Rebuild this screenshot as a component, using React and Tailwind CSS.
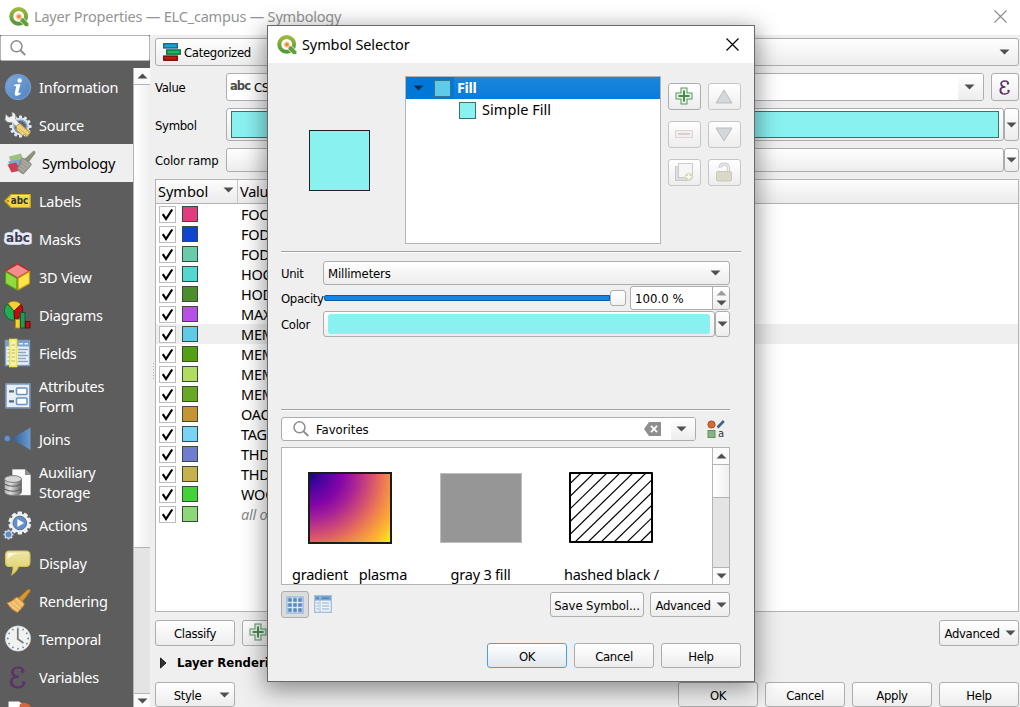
import React from "react";

const UI = "font-['Noto_Sans','Open_Sans',sans-serif]";
const TAH = "font-['DejaVu_Sans_Condensed','DejaVu_Sans',sans-serif] [font-stretch:condensed] text-[13px]";
const TXT = TAH + " tracking-[-0.33px] pt-[2px]";
const BTN = "border border-[#adadad] rounded-[3px] bg-linear-to-b from-white to-[#ededed]";

function Arrow({ up, className = "", fill = "#505050" }) {
  return (
    <svg className={"shrink-0 " + className} width="11" height="6" viewBox="0 0 11 6">
      <path d={up ? "M0.5 5.5H10.5L5.5 0.5Z" : "M0.5 0.5H10.5L5.5 5.5Z"} fill={fill} />
    </svg>
  );
}

function Logo({ size }) {
  return (
    <svg width={size} height={size} viewBox="0 0 20 20" className="shrink-0">
      <defs>
        <linearGradient id="ring" x1="0" y1="0" x2="0" y2="1">
          <stop offset="0" stopColor="#9cb83c" />
          <stop offset="1" stopColor="#559a3a" />
        </linearGradient>
        <radialGradient id="dot">
          <stop offset="0" stopColor="#e8692a" />
          <stop offset="0.45" stopColor="#f2a860" />
          <stop offset="1" stopColor="#fdf0d4" stopOpacity="0.2" />
        </radialGradient>
      </defs>
      <circle cx="9.7" cy="9.4" r="7.4" fill="none" stroke="url(#ring)" strokeWidth="4" />
      <path d="M11 11.2L14.2 10.6L19.8 16.4V19.6H16.2L11 14.2Z" fill="#5f9f3c" stroke="#fff" strokeWidth="0.8" />
      <circle cx="9.9" cy="9.6" r="4" fill="url(#dot)" />
    </svg>
  );
}

function Search({ className = "" }) {
  return (
    <svg className={"shrink-0 " + className} width="16" height="16" viewBox="0 0 16 16" fill="none" stroke="#8c8c8c" strokeWidth="1.5">
      <circle cx="6.5" cy="6.3" r="5.5" />
      <path d="M10.6 10.4L15.2 15" strokeWidth="2" />
    </svg>
  );
}

function Plus() {
  return (
    <svg width="18" height="18" viewBox="0 0 18 18" className="shrink-0">
      <path d="M5.5 0.5H12.5V5.5H17.5V12.5H12.5V17.5H5.5V12.5H0.5V5.5H5.5Z" fill="#5a9560" />
      <path d="M6.5 1.5H11.5V6.5H16.5V11.5H11.5V16.5H6.5V11.5H1.5V6.5H6.5Z" fill="#e8f3e6" />
      <path d="M9 3.5V14.5M3.5 9H14.5" stroke="#4a8a51" strokeWidth="2" />
    </svg>
  );
}

const gear = (cx, cy, r, n, t) =>
  Array.from({ length: n }, (_, i) => {
    const a = (i * 2 * Math.PI) / n;
    return (
      <rect key={i} x={cx - t / 2} y={cy - r} width={t} height={r} rx="0.6" transform={`rotate(${(a * 180) / Math.PI} ${cx} ${cy})`} />
    );
  });

const ICONS = {
  info: (
    <>
      <defs>
        <linearGradient id="inf" x1="0" y1="0" x2="1" y2="1">
          <stop offset="0" stopColor="#7fa9da" />
          <stop offset="1" stopColor="#4f83c2" />
        </linearGradient>
      </defs>
      <circle cx="14" cy="14" r="12.7" fill="#5b8fd0" stroke="#7ea8dc" strokeWidth="0.8" />
      <circle cx="14" cy="14" r="11.8" fill="url(#inf)" />
      <circle cx="15.6" cy="7.5" r="2.2" fill="#fff" />
      <path d="M10.4 11.4L16.4 10.9L14.4 19.4Q14.2 21 16.8 19.4L16.4 21.2Q10 24.8 10.8 19.8L12.3 13.3L10.1 13Z" fill="#fff" />
    </>
  ),
  source: (
    <>
      <g fill="#e4e8ee">{gear(16.5, 15.5, 11, 12, 3)}</g>
      <circle cx="16.5" cy="15.5" r="9" fill="#dce2ea" />
      <circle cx="16.5" cy="15.5" r="6.2" fill="#5d636b" stroke="#7f9dc6" strokeWidth="1.6" />
      <path d="M1.5 3.2L5 6.2L8.2 4.8L7.8 1.2Q12.8 1.6 11.5 8L17 14.5L14 17.5L8 11.2Q2.5 12.5 1 8.2L1.5 6Z" fill="#f0f0ee" stroke="#777" strokeWidth="0.5" />
      <path d="M12.2 15L16 12.5L26.5 21.5L23 26L20.5 23.5L18.500 24.500L12.500 19Z" fill="#ecd37c" stroke="#a98732" strokeWidth="0.9" />
      <path d="M14 17L24 24.500M17 14.500L25.500 22" stroke="#c3a04a" strokeWidth="0.7" />
    </>
  ),
  symbology: (
    <>
      <path d="M2 7.5L14 4.5L18.5 16L5 17.500Z" fill="#9cc27c" />
      <path d="M1 12.5L12 10.500L17 17L5 20.5Z" fill="#7ea9d0" />
      <path d="M0.500 15.500L9 13.500L14 21.500L4.500 23.5Z" fill="#cc4057" />
      <path d="M26.500 2.2Q28.500 1.8 28 4.2L21.500 13L17.800 10.2Z" fill="#8f9478" stroke="#71765f" strokeWidth="0.6" />
      <path d="M14 10.500Q15 8 17 9.500L23.500 14Q25 15.500 23.500 17L16.500 25Q12 23.500 10.200 19.500Q13 15.500 14 10.500Z" fill="#9a9c8f" stroke="#77796d" strokeWidth="0.7" />
      <path d="M15.500 10.500L23 16M12.500 18.500L17.500 23M14 16L19.500 20.500M15.500 13.500L21.500 18" stroke="#c0c0b4" strokeWidth="0.8" />
    </>
  ),
  labels: (
    <>
      <path d="M0.800 14L7 7.500H26.300V20.500H7Z" fill="#f2d73f" stroke="#c9a41b" strokeWidth="1.2" />
      <circle cx="4" cy="14" r="1.1" fill="#8c7a20" />
      <path d="M7.500 8.700H25.200" stroke="#fbf0a0" strokeWidth="1" />
      <text x="6.8" y="17" fontFamily="DejaVu Sans" fontWeight="bold" fontSize="10" fill="#333" textLength="17.5" lengthAdjust="spacingAndGlyphs">abc</text>
    </>
  ),
  masks: (
    <>
      <text x="2" y="17" fontFamily="DejaVu Sans" fontWeight="bold" fontSize="13" fill="#e6e9fb" stroke="#e6e9fb" strokeWidth="5.500" strokeLinejoin="round" textLength="24" lengthAdjust="spacingAndGlyphs">abc</text>
      <text x="2" y="17" fontFamily="DejaVu Sans" fontWeight="bold" fontSize="13" fill="#3c3c46" textLength="24" lengthAdjust="spacingAndGlyphs">abc</text>
    </>
  ),
  view3d: (
    <>
      <path d="M13.500 0.800L25.500 8L13.500 15L1.500 8Z" fill="#f48d8d" stroke="#c02626" strokeWidth="1.4" strokeLinejoin="round" />
      <path d="M1.500 8.500L13 15.300V27L1.500 20.500Z" fill="#8fdc3c" stroke="#4f9a1c" strokeWidth="1.2" strokeLinejoin="round" />
      <path d="M14 15.300L25.500 8.500V20.500L14 27Z" fill="#fbe44c" stroke="#c49a10" strokeWidth="1.2" strokeLinejoin="round" />
    </>
  ),
  diagrams: (
    <>
      <path d="M10 10L4 2.500A9 9 0 0 1 17 3.500Z" fill="#fbd02c" stroke="#9c7b10" strokeWidth="0.8" />
      <path d="M10 10L3.600 3A9.300 9.300 0 0 0 10.500 19.200Z" fill="#1fae54" stroke="#0d5c2a" strokeWidth="0.8" />
      <path d="M10 10L17 3.500A9.200 9.200 0 0 1 10.500 18Z" fill="#c00d0d" stroke="#5f0505" strokeWidth="0.8" />
      <rect x="11.500" y="18.500" width="4.500" height="8.500" fill="#fbd02c" stroke="#b78c0d" strokeWidth="0.9" />
      <rect x="16.500" y="11.500" width="4.500" height="15.500" fill="#1f9a58" stroke="#0e5630" strokeWidth="0.9" />
      <rect x="21.500" y="20.500" width="4.500" height="6.500" fill="#c00d0d" stroke="#5f0505" strokeWidth="0.9" />
    </>
  ),
  fields: (
    <>
      <rect x="1.500" y="1.500" width="24" height="25" fill="#eaf1f8" stroke="#7d9dc2" strokeWidth="1.4" />
      <rect x="2" y="2" width="23" height="5.500" fill="#7ba2cf" />
      <path d="M15 4.800H19M20.500 4.800H24" stroke="#e4edf7" strokeWidth="1.4" />
      <path d="M14 10.500H24M14 13.500H22M14 16.500H24M14 19.500H22M14 22.500H24" stroke="#8fa6be" strokeWidth="1.3" />
      <path d="M3.500 10.500H5M3.500 14H5M3.500 18H5M3.500 22H5" stroke="#8fa6be" strokeWidth="1.2" />
      <rect x="5.800" y="0.500" width="6.800" height="27" fill="#f9f3a4" stroke="#eee34a" strokeWidth="1.6" />
      <path d="M7.500 6H11M7.500 11H11M7.500 14H11M7.500 18H11M7.500 22H11" stroke="#b5b58a" strokeWidth="1" />
    </>
  ),
  form: (
    <>
      <rect x="1.900" y="1.900" width="24" height="24" fill="#e9eef3" stroke="#7694ba" strokeWidth="1.6" />
      <rect x="12.500" y="6" width="10.500" height="6.500" rx="1" fill="#fff" stroke="#6d93c4" strokeWidth="1.6" />
      <rect x="12.500" y="16" width="10.500" height="6.500" rx="1" fill="#fff" stroke="#6d93c4" strokeWidth="1.6" />
      <path d="M5 9.300H10M5 19.300H10" stroke="#4e6886" strokeWidth="2.2" />
    </>
  ),
  joins: (
    <>
      <defs>
        <linearGradient id="jn" x1="0" x2="1">
          <stop offset="0" stopColor="#2f5d92" />
          <stop offset="1" stopColor="#6a9bd0" />
        </linearGradient>
      </defs>
      <circle cx="3.200" cy="13.500" r="3" fill="#6293cb" stroke="#3c6699" strokeWidth="0.6" />
      <path d="M7.500 13.500L26.500 2.500V25Z" fill="url(#jn)" />
    </>
  ),
  aux: (
    <>
      <defs>
        <linearGradient id="db" x1="0" x2="1">
          <stop offset="0" stopColor="#b5b5b5" />
          <stop offset="0.35" stopColor="#dedede" />
          <stop offset="1" stopColor="#666" />
        </linearGradient>
      </defs>
      <path d="M8.500 1.500H21L26.500 7V27H8.500Z" fill="#fbfbfb" stroke="#ddd" strokeWidth="0.5" />
      <path d="M21 1.500V7H26.500Z" fill="#8a8a8a" />
      <path d="M0.500 11.500V24C0.500 28.500 17.500 28.500 17.500 24V11.500Z" fill="url(#db)" stroke="#6c6c6c" strokeWidth="0.8" />
      <path d="M0.500 16Q9 20.500 17.500 16M0.500 21Q9 25.500 17.500 21" fill="none" stroke="#5f5f5f" strokeWidth="1.1" />
      <ellipse cx="9" cy="11" rx="8.500" ry="3.400" fill="#d6d6d6" stroke="#777" strokeWidth="0.9" />
    </>
  ),
  actions: (
    <>
      <g fill="#eef0f4">{gear(15.8, 12, 11.4, 10, 4.4)}</g>
      <circle cx="15.800" cy="12" r="9.600" fill="#eef0f4" />
      <circle cx="15.800" cy="12" r="6.800" fill="#6090cc" stroke="#5a6e8c" strokeWidth="1" />
      <path d="M13.400 8L20 12L13.400 16Z" fill="#fff" />
      <g fill="#cfd9e6">{gear(4.500, 23.500, 5, 8, 2.2)}</g>
      <circle cx="4.500" cy="23.500" r="3.400" fill="#5d8dc8" stroke="#dfe6ef" strokeWidth="0.8" />
    </>
  ),
  display: (
    <>
      <defs>
        <linearGradient id="bb" x1="0" y1="0" x2="0" y2="1">
          <stop offset="0" stopColor="#ece6a8" />
          <stop offset="1" stopColor="#dfcf63" />
        </linearGradient>
      </defs>
      <path d="M5 2H22Q26 2 26 6V13Q26 17.500 22 17.500H14.500Q13 22 8 25.500Q9.500 21 9 17.500H5Q1.500 17.500 1.500 13V6Q1.500 2 5 2Z" fill="url(#bb)" stroke="#d6c258" strokeWidth="1.1" />
      <path d="M3.500 10V6Q3.500 4 6 4H17Q10 4.500 7 7Q5 8.500 3.500 10Z" fill="#fbf9e6" />
    </>
  ),
  rendering: (
    <>
      <path d="M24 2.500Q27 1.500 26 4.500L18.500 14.500L14.500 11Z" fill="#d9982f" stroke="#b27419" strokeWidth="0.9" />
      <path d="M11 11.500Q12.500 9.500 14.500 11L19.500 15.500Q21 17.500 19.500 19L13.500 25.500Q7.500 23.500 3 16Q7.500 15 11 11.500Z" fill="#ecb663" stroke="#c2832b" strokeWidth="0.9" />
      <path d="M5 16.300L13.500 24M8 14.500L16.500 22M12 12L19 18.500" stroke="#f7dcae" strokeWidth="1" />
    </>
  ),
  temporal: (
    <>
      <circle cx="14" cy="13.500" r="12.600" fill="#f1f1f0" stroke="#d7d7d7" strokeWidth="0.8" />
      <g fill="#5d86b4">
        {Array.from({ length: 12 }, (_, i) => (
          <circle key={i} cx="14" cy="3.300" r="0.900" transform={`rotate(${i * 30} 14 13.5)`} />
        ))}
      </g>
      <path d="M13.800 4V14L19.500 18" fill="none" stroke="#7b7b7b" strokeWidth="1.800" />
    </>
  ),
};

function Eps({ size = 23, className = "" }) {
  return (
    <svg width={(size * 17) / 23} height={size} viewBox="0 0 17 23" className={"shrink-0 " + className}>
      <path d="M14.500 6.500C14.500 3 12.500 1.500 9.200 1.500C5.800 1.500 3.200 3.400 3.200 6.300C3.200 9 5.300 10.600 9.800 10.800C4.300 10.900 1.800 13 1.800 16C1.800 19.500 5 21.400 8.900 21.400C13 21.400 15.800 19.300 15.300 15.600" fill="none" stroke="#5d3269" strokeWidth="2.200" />
      <path d="M3.900 4Q2.600 8 6.300 10M3.100 13.500Q1.300 18 5.300 20.300" fill="none" stroke="#5d3269" strokeWidth="2.200" />
      <circle cx="13.500" cy="5.500" r="1.700" fill="#5d3269" />
      <circle cx="14.300" cy="16.600" r="1.700" fill="#5d3269" />
    </svg>
  );
}

const NAV = [
  ["Information", "info"],
  ["Source", "source"],
  ["Symbology", "symbology"],
  ["Labels", "labels"],
  ["Masks", "masks"],
  ["3D View", "view3d"],
  ["Diagrams", "diagrams"],
  ["Fields", "fields"],
  ["Attributes\nForm", "form"],
  ["Joins", "joins"],
  ["Auxiliary\nStorage", "aux"],
  ["Actions", "actions"],
  ["Display", "display"],
  ["Rendering", "rendering"],
  ["Temporal", "temporal"],
  ["Variables", "eps"],
];

const ROWS = [
  ["bg-[#e03c7e]", "FOC"],
  ["bg-[#0f45d2]", "FOD"],
  ["bg-[#68cbab]", "FOD"],
  ["bg-[#53d7d1]", "HOC"],
  ["bg-[#4c8e2c]", "HOD"],
  ["bg-[#b650e8]", "MAX"],
  ["bg-[#60cbe8]", "MEM"],
  ["bg-[#52a015]", "MEM"],
  ["bg-[#b0dc60]", "MEM"],
  ["bg-[#68a825]", "MEM"],
  ["bg-[#c69434]", "OAC"],
  ["bg-[#79d3f6]", "TAG"],
  ["bg-[#6f7cd0]", "THD"],
  ["bg-[#c6b24c]", "THD"],
  ["bg-[#42d338]", "WOO"],
  ["bg-[#8cd879]", "all other values"],
];

function Button({ label, arrow, className = "" }) {
  return (
    <div className={`${BTN} flex items-center justify-center whitespace-nowrap text-black ${className}`}>
      <span className={TXT}>{label}</span>
      {arrow && <Arrow />}
    </div>
  );
}

function Sidebar() {
  return (
    <div className="flex w-[150px] shrink-0 flex-col bg-[#5d5d5d]">
      <div className="flex h-[26px] shrink-0 items-center rounded-[2px] border border-[#b4b4b4] bg-white pl-[9px]">
        <Search />
      </div>
      <div className="mt-[7px] flex min-h-0 flex-1">
        <div className="w-[133px] overflow-hidden">
          {NAV.map(([label, icon], i) => {
            const two = label.includes("\n");
            const sel = i === 2;
            return (
              <div key={label} className={`flex items-center ${two ? "h-[48px]" : "h-[38px]"} ${sel ? "bg-[#efefef] pl-[7px] text-black" : "pl-[4px] text-white"}`}>
                {icon === "eps" ? (
                  <Eps className="mr-[13px] ml-[5px]" size={23} />
                ) : (
                  <svg width="28" height="28" viewBox="0 0 28 28" className="mr-[7px] shrink-0 overflow-visible">
                    {ICONS[icon]}
                  </svg>
                )}
                <span className={`${UI} whitespace-pre text-[14.5px] leading-[20px] tracking-[-0.25px]`}>{label}</span>
              </div>
            );
          })}
          <svg width="133" height="12" viewBox="0 0 133 12">
            <path d="M8.500 5.500H19L24 9V12H8.500Z" fill="#fff" />
            <path d="M20 8L23 6.500L26 7L30 9L31 12H19Z" fill="#d8643c" />
          </svg>
        </div>
        <div className="flex w-[17px] flex-col border-l border-[#b4b4b4] bg-[#e4e4e4]">
          <div className="flex h-[17px] items-center justify-center border-b border-[#b4b4b4] bg-[#fbfbfb]">
            <Arrow up />
          </div>
          <div className="h-[463px] border-b border-[#b4b4b4] bg-linear-to-r from-white to-[#efefef]" />
          <div className="flex-1" />
          <div className="flex h-[14px] items-center justify-center border-t border-[#b4b4b4] bg-[#fbfbfb] pt-px">
            <Arrow />
          </div>
        </div>
      </div>
    </div>
  );
}

function Table() {
  return (
    <div className={`${UI} mt-[7px] flex h-[433px] w-[864px] flex-col border border-[#b4b4b4] bg-white text-[14.5px] tracking-[-0.25px] text-black`}>
      <div className="flex h-[24px] shrink-0 items-center border-b border-[#b4b4b4] bg-linear-to-b from-[#fdfdfd] to-[#ebebeb]">
        <div className="flex h-full w-[82px] items-center border-r border-[#c6c6c6] pl-[2px] pt-px">
          <span className="w-[65px] tracking-[0px]">Symbol</span>
          <Arrow className="mb-[4px]" />
        </div>
        <span className="pl-[2px] pt-px">Value</span>
      </div>
      {ROWS.map(([color, text], i) => (
        <div key={i} className={`flex h-[20px] shrink-0 items-center ${i === 6 ? "bg-[#efefef]" : ""}`}>
          <div className="ml-[3px] flex size-[17px] items-center justify-center border border-[#bcbcbc] bg-white">
            <svg width="13" height="13" viewBox="0 0 13 13">
              <path d="M1.800 6.200L5 11L11.200 1.500" fill="none" stroke="#000" strokeWidth="2.200" />
            </svg>
          </div>
          <div className={`ml-[6px] size-[16px] border border-[#3c4a3c] ${color}`} />
          <span className={`ml-[43px] leading-[20px] ${i === 15 ? "text-[#8a8a8a] italic" : ""}`}>{text}</span>
        </div>
      ))}
    </div>
  );
}

function Splitter() {
  return (
    <div className="flex w-[5px] shrink-0 flex-col items-center justify-center gap-[2px] pl-[2px]">
      {Array.from({ length: 6 }, (_, i) => (
        <div key={i} className="size-px bg-[#a8a8a8]" />
      ))}
    </div>
  );
}

function Main() {
  return (
    <div className="flex w-[864px] flex-col pt-[3px]">
      <div className={`${BTN} flex h-[28px] items-center pl-[7px] pr-[8px]`}>
        <svg width="18" height="18" viewBox="0 0 18 18" className="mr-[3px]">
          <rect x="0.700" y="0.700" width="13.600" height="4.300" fill="#18a5d3" stroke="#1050a0" strokeWidth="1.200" />
          <rect x="3.700" y="6.900" width="13.600" height="4.300" fill="#10bd66" stroke="#0a5f33" strokeWidth="1.200" />
          <rect x="0.700" y="13" width="13.600" height="4.300" fill="#c8140a" stroke="#6d0803" strokeWidth="1.200" />
        </svg>
        <span className={`${TXT} flex-1`}>Categorized</span>
        <Arrow />
      </div>
      <div className="mt-[7px] flex h-[28px] items-center">
        <span className={`${TXT} w-[71px]`}>Value</span>
        <div className="flex h-full w-[758px] items-center overflow-hidden rounded-[3px] border border-[#adadad] bg-white">
          <span className="w-[27px] pb-px pl-[3px] font-['DejaVu_Sans',sans-serif] text-[11.5px] font-bold tracking-[-0.9px] text-[#4b4b4b]">abc</span>
          <span className={`${TXT} flex-1`}>CS</span>
          <div className="flex h-full w-[25px] items-center justify-center bg-linear-to-b from-white to-[#ededed] pr-[2px]">
            <Arrow />
          </div>
        </div>
        <div className={`${BTN} ml-[7px] flex h-full w-[28px] items-center justify-center`}>
          <Eps size={15} />
        </div>
      </div>
      <div className="mt-[7px] flex h-[33px] items-center">
        <span className={`${TXT} w-[71px]`}>Symbol</span>
        <div className={`${BTN} flex h-full w-[778px] items-center pl-[4px]`}>
          <div className="h-[27px] w-[768px] border border-[#3f6f6f] bg-[#8af1f1]" />
        </div>
        <div className={`${BTN} flex h-full w-[15px] items-center justify-center`}>
          <Arrow />
        </div>
      </div>
      <div className="mt-[7px] flex h-[24px] items-center">
        <span className={`${TAH} w-[71px] pt-[2px] tracking-[-0.15px]`}>Color ramp</span>
        <div className={`${BTN} h-full w-[778px]`} />
        <div className={`${BTN} flex h-full w-[15px] items-center justify-center`}>
          <Arrow />
        </div>
      </div>
      <Table />
      <div className="mt-[8px] flex h-[26px] justify-between">
        <div className="flex gap-[7px]">
          <Button className="w-[80px]" label="Classify" />
          <div className={`${BTN} flex w-[34px] items-center justify-center pr-[2px] pb-[2px]`}>
            <Plus />
          </div>
        </div>
        <Button className="w-[80px] gap-[5px] pl-[2px]" label="Advanced" arrow />
      </div>
      <div className="mt-[7px] flex h-[20px] items-center">
        <svg width="22" height="12" viewBox="0 0 22 12">
          <path d="M5.500 1L11 6L5.500 11Z" fill="#333" stroke="#222" />
        </svg>
        <span className={`${TAH} font-bold whitespace-nowrap tracking-[0px]`}>Layer Rendering</span>
      </div>
      <div className="mt-[9px] flex h-[25px] gap-[7px]">
        <Button className="mr-auto w-[80px] gap-[18px] pl-[14px]" label="Style" arrow />
        <Button className="w-[80px]" label="OK" />
        <Button className="w-[80px]" label="Cancel" />
        <Button className="w-[80px]" label="Apply" />
        <Button className="w-[80px]" label="Help" />
      </div>
    </div>
  );
}

function ToolButton({ children, off = true }) {
  return (
    <div className={`flex h-[27px] w-[33px] items-center justify-center rounded-[3px] border bg-linear-to-b from-white to-[#ededed] pr-px pb-px ${off ? "border-[#c6c6c6]" : "border-[#adadad]"}`}>
      {children}
    </div>
  );
}

function Tree() {
  return (
    <div className="flex h-[168px] pl-[41px]">
      <div className="mt-[54px] size-[61px] border border-[#222] bg-[#8af1f1]" />
      <div className={`${UI} ml-[35px] h-[168px] w-[256px] border border-[#b4b4b4] bg-white text-[14.5px] text-black`}>
        <div className="flex h-[22px] items-center bg-[#0078d7]">
          <Arrow className="ml-[7px]" fill="#0b2f50" />
          <div className="ml-[10px] size-[17px] border border-[#35748c] bg-[#60cbe8]" />
          <div className="ml-[3px] flex h-full flex-1 items-center bg-linear-to-b from-[#1a86dd] to-[#087bda] pl-[3px] font-bold tracking-[-0.4px] text-white">Fill</div>
        </div>
        <div className="flex h-[22px] items-center">
          <div className="ml-[53px] size-[17px] border border-[#3f7070] bg-[#8af1f1]" />
          <span className="pl-[6px] tracking-[0.05px]">Simple Fill</span>
        </div>
      </div>
      <div className="mt-[7px] ml-[7px] grid h-[103px] grid-cols-[33px_33px] grid-rows-[27px_27px_27px] gap-x-[7px] gap-y-[11px]">
        <ToolButton off={false}>
          <Plus />
        </ToolButton>
        <ToolButton>
          <svg width="18" height="15" viewBox="0 0 18 15">
            <path d="M9 1L17 14H1Z" fill="#d4d8db" stroke="#b9bec2" />
          </svg>
        </ToolButton>
        <ToolButton>
          <svg width="18" height="8" viewBox="0 0 18 8">
            <rect x="0.500" y="0.500" width="17" height="7" fill="#f5eeee" stroke="#ddd4d4" />
            <path d="M3 4H15" stroke="#ddcfcf" strokeWidth="2" />
          </svg>
        </ToolButton>
        <ToolButton>
          <svg width="18" height="15" viewBox="0 0 18 15">
            <path d="M9 14L17 1H1Z" fill="#d4d8db" stroke="#b9bec2" />
          </svg>
        </ToolButton>
        <ToolButton>
          <svg width="18" height="18" viewBox="0 0 18 18">
            <path d="M3.500 3.500H0.500V17.500H14.500V15" fill="#dedede" stroke="#c8c8c8" />
            <rect x="3.500" y="0.500" width="14" height="14" fill="#f6f6f6" stroke="#cccccc" />
            <circle cx="13.800" cy="13.800" r="3.900" fill="#d6d4c2" />
            <path d="M13.800 11V16.600M11 13.800H16.600" stroke="#faf9f0" strokeWidth="1.800" />
          </svg>
        </ToolButton>
        <ToolButton>
          <svg width="18" height="20" viewBox="0 0 18 20">
            <path d="M5 6Q5 2 9 2Q13.500 2 13.500 6V9" fill="none" stroke="#c9c9c9" strokeWidth="3" />
            <path d="M5 6Q5 2 9 2Q13.500 2 13.500 6V9" fill="none" stroke="#efefef" strokeWidth="1.200" />
            <rect x="1.500" y="9.500" width="15" height="9.500" rx="1" fill="#dad8c8" stroke="#cbc9ba" />
          </svg>
        </ToolButton>
      </div>
    </div>
  );
}

function SymbolList() {
  return (
    <div className="mt-[6px] flex h-[138px] w-[449px] border border-[#b4b4b4] bg-white">
      <div className={`${UI} grid flex-1 grid-cols-[131px_131px_1fr] content-start overflow-hidden pt-[23px] pl-[2px] text-[14.5px] tracking-[-0.2px] text-black`}>
        <div className="flex flex-col items-center">
          <svg width="86" height="74" viewBox="0 0 86 74">
            <defs>
              <radialGradient id="plasma" gradientUnits="userSpaceOnUse" cx="2" cy="2" r="108">
                <stop offset="0" stopColor="#0d0887" />
                <stop offset="0.130" stopColor="#4b03a1" />
                <stop offset="0.300" stopColor="#8405a7" />
                <stop offset="0.420" stopColor="#a62098" />
                <stop offset="0.550" stopColor="#cc4778" />
                <stop offset="0.700" stopColor="#ee7b51" />
                <stop offset="0.860" stopColor="#fdb42f" />
                <stop offset="1" stopColor="#f0f921" />
              </radialGradient>
            </defs>
            <rect x="2" y="2" width="82" height="70" fill="url(#plasma)" stroke="#1c1c1c" strokeWidth="2" />
          </svg>
          <span className="mt-[19px] leading-[20px] whitespace-pre">gradient   plasma</span>
        </div>
        <div className="flex flex-col items-center">
          <div className="mt-[2px] h-[70px] w-[82px] border border-[#bdbdbd] bg-[#969696]" />
          <span className="mt-[21px] leading-[20px]">gray 3 fill</span>
        </div>
        <div className="flex w-[131px] flex-col items-center">
          <svg width="86" height="74" viewBox="0 0 86 74">
            <defs>
              <clipPath id="hb">
                <rect x="1" y="2" width="82" height="70" />
              </clipPath>
            </defs>
            <g clipPath="url(#hb)" stroke="#000" strokeWidth="1.200">
              {Array.from({ length: 12 }, (_, i) => (
                <path key={i} d={`M${-62 + i * 13} 74L${13 + i * 13} 1`} />
              ))}
            </g>
            <rect x="1" y="2" width="82" height="69" fill="none" stroke="#000" strokeWidth="2" strokeLinejoin="round" />
          </svg>
          <span className="mt-[19px] leading-[20px] tracking-[-0.25px]">hashed black /</span>
        </div>
      </div>
      <div className="flex w-[17px] flex-col border-l border-[#b4b4b4] bg-[#e4e4e4]">
        <div className="flex h-[17px] items-center justify-center border-b border-[#b4b4b4] bg-[#fbfbfb]">
          <Arrow up />
        </div>
        <div className="h-[33px] border-b border-[#b4b4b4] bg-linear-to-r from-white to-[#efefef]" />
        <div className="flex-1" />
        <div className="flex h-[17px] items-center justify-center border-t border-[#b4b4b4] bg-[#fbfbfb]">
          <Arrow />
        </div>
      </div>
    </div>
  );
}

function Dialog() {
  return (
    <div className="absolute top-[25px] left-[267px] flex h-[657px] w-[488px] flex-col border border-[#6a6a6a] bg-[#efefef] shadow-[0_6px_22px_2px_rgba(0,0,0,0.42)]">
      <div className="flex h-[37px] shrink-0 items-center bg-white pl-[9px] pr-[15px]">
        <Logo size={20} />
        <span className={`${UI} flex-1 pl-[5px] text-[14.5px] tracking-[-0.1px] text-black`}>Symbol Selector</span>
        <svg width="13" height="13" viewBox="0 0 13 13">
          <path d="M0.500 0.500L12.500 12.500M12.500 0.500L0.500 12.500" stroke="#000" strokeWidth="1.200" />
        </svg>
      </div>
      <div className="pt-[13px]">
        <Tree />
      </div>
      <div className="ml-[13px] flex w-[449px] flex-col">
        <div className="mt-[7px] h-[2px] w-[460px] border-t border-b border-t-[#a2a2a2] border-b-white" />
        <div className="mt-[8px] flex h-[24px] items-center">
          <span className={`${TXT} w-[42px]`}>Unit</span>
          <div className={`${BTN} flex h-full flex-1 items-center justify-between pr-[8px] pl-[4px]`}>
            <span className={`${TAH} pt-[2px] tracking-[-0.15px]`}>Millimeters</span> <Arrow />
          </div>
        </div>
        <div className="mt-px flex h-[24px] items-center">
          <span className={`${TXT} w-[43px] whitespace-nowrap`}>Opacity</span>
          <div className="h-[6px] w-[286px] rounded-l-[2px] border border-[#0a5ca8] bg-[#0f86ea]" />
          <div className="mb-px h-[16px] w-[16px] rounded-[3px] border border-[#adadad] bg-linear-to-b from-white to-[#f3f3f3]" />
          <div className="ml-[4px] flex h-[24px] w-[100px] overflow-hidden rounded-[3px] border border-[#adadad] bg-white">
            <span className={`${TAH} flex-1 self-center pt-[2px] pl-[4px] tracking-[0.05px]`}>100.0 %</span>
            <div className="flex w-[17px] flex-col items-center justify-center gap-[4px] border-l border-[#adadad] bg-linear-to-b from-white to-[#ededed]">
              <Arrow up fill="#9c9c9c" />
              <Arrow />
            </div>
          </div>
        </div>
        <div className="mt-px flex h-[26px] items-center">
          <span className={`${TXT} w-[42px]`}>Color</span>
          <div className={`${BTN} flex h-full w-[392px] items-center pl-[4px]`}>
            <div className="h-[20px] w-[382px] rounded-[3px] bg-[#8af1f1]" />
          </div>
          <div className={`${BTN} flex h-full w-[15px] items-center justify-center`}>
            <Arrow />
          </div>
        </div>
        <div className="mt-[72px] h-[2px] border-t border-b border-t-[#a2a2a2] border-b-white" />
        <div className="mt-[6px] flex h-[24px] items-center">
          <div className="flex h-full w-[415px] items-center overflow-hidden rounded-[3px] border border-[#adadad] bg-white pl-[11px]">
            <Search />
            <span className={`${TAH} flex-1 pt-[2px] pl-[7px] tracking-[0px]`}>Favorites</span>
            <svg width="17" height="14" viewBox="0 0 17 14" className="mr-[10px]">
              <path d="M0 7L5 0H17V14H5Z" fill="#8f8f8f" />
              <path d="M7 3.800L13 10.200M13 3.800L7 10.200" stroke="#fff" strokeWidth="1.800" />
            </svg>
            <div className="flex h-full w-[24px] items-center justify-center bg-linear-to-b from-white to-[#ededed] pr-[3px]">
              <Arrow />
            </div>
          </div>
          <svg width="18" height="18" viewBox="0 0 18 18" className="ml-[11px]">
            <circle cx="4.500" cy="4.500" r="3.600" fill="#d8682f" stroke="#b04f1c" />
            <path d="M10.500 7.500L16.800 1" stroke="#3f6289" strokeWidth="2.600" />
            <rect x="1" y="10.500" width="7" height="7" fill="#86b583" stroke="#5d9160" />
            <text x="11" y="17" fontFamily="DejaVu Sans" fontSize="10" fill="#333">a</text>
          </svg>
        </div>
        <SymbolList />
        <div className="mt-[6px] flex h-[27px] items-start">
          <div className="flex h-[27px] w-[28px] items-center justify-center rounded-[3px] border border-[#adadad] bg-[#dcdcdc]">
            <svg width="18" height="18" viewBox="0 0 18 18">
              <rect width="18" height="18" rx="1" fill="#a9c3e0" />
              <path d="M6.500 1.500V16.500M11.500 1.500V16.500M1.500 6.500H16.500M1.500 11.500H16.500" stroke="#dfe8f1" strokeWidth="1.300" />
              <g fill="#5b8ac0">
                {[0, 1, 2].map((r) => [0, 1, 2].map((c) => <rect key={`${r}${c}`} x={2.3 + c * 5} y={2.3 + r * 5} width="3.400" height="3.400" rx="0.500" />))}
              </g>
            </svg>
          </div>
          <svg width="18" height="18" viewBox="0 0 18 18" className="mt-[4px] ml-[5px]">
            <rect x="0.700" y="0.700" width="16.600" height="16.600" fill="#edf3f8" stroke="#a3c0dd" strokeWidth="1.400" />
            <rect x="1" y="1" width="16" height="4.500" fill="#7ba6d0" />
            <path d="M6 1V17" stroke="#a3c0dd" />
            <path d="M2.500 3.200H5M8 3.200H15" stroke="#4f80b4" strokeWidth="1.200" />
            <path d="M2.500 8H5M8 8H15M2.500 11H5M8 11H15M2.500 14H5M8 14H15" stroke="#8fb0cf" strokeWidth="1.200" />
          </svg>
          <div className={`${BTN} mt-px ml-auto flex h-[25px] w-[94px] items-center justify-center`}>
            <span className={`${TAH} pt-[2px] tracking-[-0.12px] whitespace-nowrap`}>Save Symbol...</span>
          </div>
          <Button className="mt-px ml-[6px] h-[25px] w-[80px] gap-[5px] pl-[2px]" label="Advanced" arrow />
        </div>
        <div className="mt-[25px] flex h-[25px] w-[460px] justify-end gap-[7px]">
          <div className="flex w-[80px] items-center justify-center rounded-[3px] border border-[#3fa4f4] bg-linear-to-b from-white to-[#dfe7ee]">
            <span className={TXT}>OK</span>
          </div>
          <Button className="w-[80px]" label="Cancel" />
          <Button className="w-[80px]" label="Help" />
        </div>
      </div>
    </div>
  );
}

export default function App() {
  return (
    <div className="relative flex h-[707px] w-[1020px] flex-col overflow-hidden bg-[#efefef] text-black">
      <div className="flex h-[35px] shrink-0 items-center bg-white pr-[13px] pb-[2px] pl-[9px]">
        <Logo size={20} />
        <span className={`${UI} flex-1 pl-[5px] text-[14.5px] tracking-[-0.2px] text-[#949494]`}>Layer Properties — ELC_campus — Symbology</span>
        <svg width="13" height="13" viewBox="0 0 13 13">
          <path d="M0.500 0.500L12.500 12.500M12.500 0.500L0.500 12.500" stroke="#8a8a8a" strokeWidth="1.100" />
        </svg>
      </div>
      <div className="flex min-h-0 flex-1">
        <Sidebar />
        <Splitter />
        <Main />
      </div>
      <Dialog />
    </div>
  );
}
